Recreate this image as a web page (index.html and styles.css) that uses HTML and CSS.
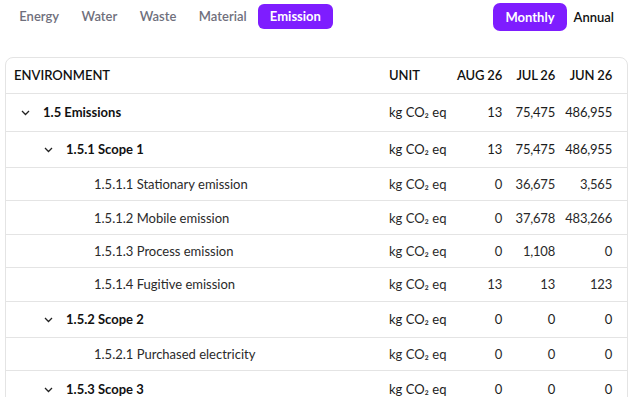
FILE: index.html
```html
<!DOCTYPE html>
<html>
<head>
<meta charset="utf-8">
<link rel="stylesheet" href="styles.css">
</head>
<body>
<div class="toolbar">
  <div class="tabs">
    <span class="tab">Energy</span>
    <span class="tab">Water</span>
    <span class="tab">Waste</span>
    <span class="tab">Material</span>
    <span class="tab active">Emission</span>
  </div>
  <div class="periods">
    <span class="period active">Monthly</span>
    <span class="period">Annual</span>
  </div>
</div>
<div class="card">
  <table class="grid">
    <colgroup>
      <col class="c-name"><col class="c-unit"><col class="c-aug"><col class="c-jul"><col class="c-jun">
    </colgroup>
    <thead>
      <tr class="head">
        <th class="name">ENVIRONMENT</th><th class="unit">UNIT</th><th class="num">AUG 26</th><th class="num">JUL 26</th><th class="num last">JUN 26</th>
      </tr>
    </thead>
    <tbody>
      <tr class="group top">
        <td class="name lvl0"><svg class="chev" width="9" height="6" viewBox="0 0 9 6"><polyline points="1,1 4.5,4.5 8,1" fill="none" stroke="#222" stroke-width="1.3"/></svg>1.5 Emissions</td>
        <td class="unit">kg CO₂ eq</td><td class="num">13</td><td class="num">75,475</td><td class="num last">486,955</td>
      </tr>
      <tr class="group">
        <td class="name lvl1"><svg class="chev" width="9" height="6" viewBox="0 0 9 6"><polyline points="1,1 4.5,4.5 8,1" fill="none" stroke="#222" stroke-width="1.3"/></svg>1.5.1 Scope 1</td>
        <td class="unit">kg CO₂ eq</td><td class="num">13</td><td class="num">75,475</td><td class="num last">486,955</td>
      </tr>
      <tr class="leaf">
        <td class="name lvl2">1.5.1.1 Stationary emission</td>
        <td class="unit">kg CO₂ eq</td><td class="num">0</td><td class="num">36,675</td><td class="num last">3,565</td>
      </tr>
      <tr class="leaf">
        <td class="name lvl2">1.5.1.2 Mobile emission</td>
        <td class="unit">kg CO₂ eq</td><td class="num">0</td><td class="num">37,678</td><td class="num last">483,266</td>
      </tr>
      <tr class="leaf">
        <td class="name lvl2">1.5.1.3 Process emission</td>
        <td class="unit">kg CO₂ eq</td><td class="num">0</td><td class="num">1,108</td><td class="num last">0</td>
      </tr>
      <tr class="leaf">
        <td class="name lvl2">1.5.1.4 Fugitive emission</td>
        <td class="unit">kg CO₂ eq</td><td class="num">13</td><td class="num">13</td><td class="num last">123</td>
      </tr>
      <tr class="group">
        <td class="name lvl1"><svg class="chev" width="9" height="6" viewBox="0 0 9 6"><polyline points="1,1 4.5,4.5 8,1" fill="none" stroke="#222" stroke-width="1.3"/></svg>1.5.2 Scope 2</td>
        <td class="unit">kg CO₂ eq</td><td class="num">0</td><td class="num">0</td><td class="num last">0</td>
      </tr>
      <tr class="leaf">
        <td class="name lvl2">1.5.2.1 Purchased electricity</td>
        <td class="unit">kg CO₂ eq</td><td class="num">0</td><td class="num">0</td><td class="num last">0</td>
      </tr>
      <tr class="group">
        <td class="name lvl1"><svg class="chev" width="9" height="6" viewBox="0 0 9 6"><polyline points="1,1 4.5,4.5 8,1" fill="none" stroke="#222" stroke-width="1.3"/></svg>1.5.3 Scope 3</td>
        <td class="unit">kg CO₂ eq</td><td class="num">0</td><td class="num">0</td><td class="num last">0</td>
      </tr>
    </tbody>
  </table>
</div>
</body>
</html>
```
FILE: styles.css
```css
html, body {
  margin: 0;
  padding: 0;
  background: #ffffff;
  font-family: "Lato", "Noto Sans", sans-serif;
  font-size: 13px;
  color: #1c1c1c;
  overflow: hidden;
}
.toolbar {
  display: flex;
  justify-content: space-between;
  align-items: center;
  height: 33px;
  padding: 0 17px 0 8px;
}
.tabs {
  display: flex;
  align-items: center;
}
.tab {
  padding: 0 11.25px;
  height: 25px;
  line-height: 25px;
  border-radius: 6px;
  color: #6f6f7c;
  font-weight: 600;
}
.tab.active {
  padding: 0 12px;
  background: #7e1dff;
  color: #ffffff;
  font-weight: 700;
}
.periods {
  display: flex;
  align-items: center;
}
.period {
  padding: 0 11px 0 7px;
  height: 28px;
  line-height: 28px;
  border-radius: 7px;
  color: #111;
  font-weight: 600;
}
.period.active {
  padding: 0 12px;
  background: #7e1dff;
  color: #fff;
  font-weight: 700;
}
.card {
  margin: 24px 14px 0 5px;
  border: 1px solid #e4e4e4;
  border-radius: 8px;
  overflow: hidden;
}
.grid {
  width: 100%;
  border-collapse: collapse;
  table-layout: fixed;
}
.c-unit { width: 68px; }
.c-aug { width: 61px; }
.c-jul { width: 53px; }
.c-jun { width: 64px; }
th, td {
  padding: 0 0 0 8px;
  white-space: nowrap;
  text-align: left;
}
th {
  font-weight: 600;
  color: #111;
}
.head { height: 35px; }
tr.group { height: 36.5px; border-top: 1px solid #e4e4e4; }
tr.group.top { height: 38px; }
tr.leaf { height: 33.4px; border-top: 1px solid #e4e4e4; }
.num { text-align: right; padding: 0 8px 0 0; letter-spacing: -0.2px; }
.num.last { padding-right: 15px; }
.group .name { font-weight: 700; color: #111; }
.leaf td { color: #2a2a2a; }
.chev { display: inline-block; vertical-align: middle; margin-right: 13px; position: relative; top: -1px; }
.lvl0 { padding-left: 15px; }
.lvl1 { padding-left: 38px; }
.lvl2 { padding-left: 88px; }
```
